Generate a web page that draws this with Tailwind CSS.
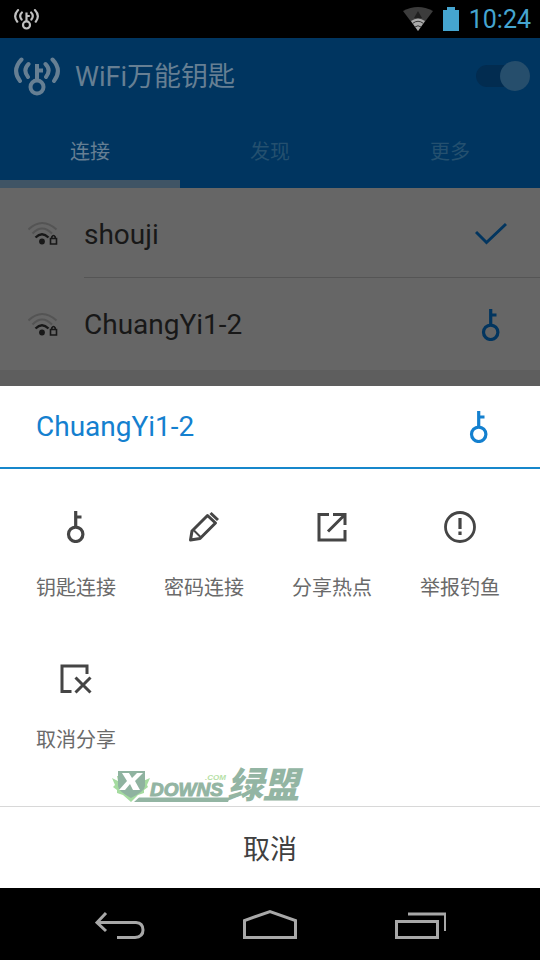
<!DOCTYPE html>
<html lang="zh-CN">
<head>
<meta charset="utf-8">
<meta name="viewport" content="width=device-width, initial-scale=1">
<title>WiFi万能钥匙</title>
<script src="https://cdn.jsdelivr.net/npm/@tailwindcss/browser@4"></script>
</head>
<body class="min-h-screen flex flex-col bg-black font-[Roboto,'Noto_Sans_CJK_SC',sans-serif]">
<svg class="hidden" aria-hidden="true">
  <symbol id="key" viewBox="0 0 32 32"><g fill="none" stroke="currentColor" stroke-width="3.200"><circle cx="15.700" cy="23.300" r="7.200"/><path d="M15.700 16V0M16 6H21.500"/></g></symbol>
  <symbol id="logo" viewBox="0 0 46 40"><g fill="none" stroke="currentColor" stroke-width="4" stroke-linecap="round"><path d="M7.500 3.500Q-2.500 14 6 25M14.500 8Q8.500 14 14 21M31.500 8Q37.500 14 32 21M38.500 3.500Q48.500 14 40 25"/><circle cx="23" cy="31" r="6.500"/><path stroke-linecap="butt" d="M23 25V8M23 14.500H29"/></g></symbol>
  <symbol id="wifi-lock" viewBox="0 0 32 26"><g fill="none" stroke-width="2"><path stroke="#545454" d="M.5 9.500Q14 -3.500 28.500 9.500M4.500 13.500Q14 3.500 24 13.500"/><path stroke="#181818" stroke-width="2.400" d="M7.500 17.500Q14 11 20.500 17.500"/><path stroke="#181818" d="M22.500 18.500H28.500V24H22.500ZM23.800 18.500V17Q25.500 14 27.200 17V18.500" stroke-width="1.600"/></g><circle cx="14" cy="21.500" r="2.900" fill="#181818"/></symbol>
</svg>

<div class="h-[38px] shrink-0 flex items-center pl-3.5 pr-[9px] text-[#45a5d0]">
  <svg class="w-[25px] h-[22px] text-[#c0c0c0]" aria-hidden="true"><use href="#logo"/></svg>
  <svg class="ml-auto w-[30px] h-6" viewBox="0 0 30 24" aria-hidden="true"><path d="M0 4Q15 -4 30 4L15 24Z" fill="#3c3c3c"/><path d="M11 11L15 4L19 11Z" fill="#202020"/><path d="M8 14Q15 9 22 14L15 24Z" fill="#aaa"/><path d="M9.500 16.500Q15 12 20.500 16.500M12 20Q15 17.500 18 20" fill="none" stroke="#333" stroke-width="1"/></svg>
  <svg class="ml-2.5 w-4 h-6" viewBox="0 0 16 24" aria-hidden="true"><path d="M0 3H4V0H12V3H16V24H0Z" fill="currentColor"/></svg>
  <time class="ml-2.5 pt-0.5 text-[25px] leading-7">10:24</time>
</div>

<header class="shrink-0 bg-[#003560] text-[#667f93]">
  <div class="h-[76px] flex items-center pl-3.5 pr-2.5">
    <svg class="w-[46px] h-10" aria-hidden="true"><use href="#logo"/></svg>
    <h1 class="ml-[15px] pt-0.5 text-[27px] leading-8">WiFi万能钥匙</h1>
    <input type="checkbox" role="switch" checked aria-label="WiFi" class="ml-auto relative appearance-none w-[54px] h-[22px] rounded-full bg-[#022c50] before:absolute before:right-0 before:-top-1 before:size-[30px] before:rounded-full before:bg-[#264e6c]">
  </div>
  <nav class="h-[74px] grid grid-cols-3 text-xl leading-7 text-[#24506f]">
    <a href="#" aria-current="page" class="flex items-center justify-center pt-2.5 border-b-8 border-[#3f5465] text-[#667f93]">连接</a>
    <a href="#" class="flex items-center justify-center pt-2.5 border-b-8 border-transparent">发现</a>
    <a href="#" class="flex items-center justify-center pt-2.5 border-b-8 border-transparent">更多</a>
  </nav>
</header>

<main class="flex-1 bg-[#5e5e5e]">
  <ul class="bg-[#666] text-[28px] leading-9 text-[#181818]">
    <li class="pl-7"><button type="button" class="w-full flex items-center gap-6 text-left">
      <svg class="w-8 h-[26px]" aria-hidden="true"><use href="#wifi-lock"/></svg>
      <span class="flex-1 h-[90px] flex items-center justify-between pt-1 pr-[33px] border-b border-[#555]">shouji
        <svg class="size-8" viewBox="0 0 32 32" fill="none" stroke="#02355f" stroke-width="3" aria-hidden="true"><path d="M1 13L11.500 23.500L31 5"/></svg></span>
    </button></li>
    <li class="pl-7"><button type="button" class="w-full flex items-center gap-6 text-left">
      <svg class="w-8 h-[26px]" aria-hidden="true"><use href="#wifi-lock"/></svg>
      <span class="flex-1 h-[92px] flex items-center justify-between pt-0.5 pr-[33px]">ChuangYi1-2
        <svg class="size-8 text-[#02355f]" aria-hidden="true"><use href="#key"/></svg></span>
    </button></li>
  </ul>
</main>

<section role="dialog" aria-labelledby="network" class="shrink-0 bg-white">
  <div class="h-[83px] flex items-center justify-between pl-9 pr-[45px] border-b-2 border-[#1687cb] text-[#1480cf]">
    <h2 id="network" class="text-[28px] leading-9">ChuangYi1-2</h2>
    <svg class="size-8" aria-hidden="true"><use href="#key"/></svg>
  </div>
  <div class="relative pl-3 pr-4 pb-[33px]">
    <div class="grid grid-cols-4 text-xl leading-7 text-[#6a6a6a]">
      <button type="button" class="flex flex-col items-center gap-[31px] pt-[42px] pb-[19px]"><svg class="size-8 text-[#454545]" aria-hidden="true"><use href="#key"/></svg>钥匙连接</button>
      <button type="button" class="flex flex-col items-center gap-[31px] pt-[42px] pb-[19px]"><svg class="size-8" viewBox="0 0 32 32" fill="none" stroke="#454545" stroke-width="3" stroke-linejoin="round" aria-hidden="true"><path d="M2.500 29L4 20L19.500 4.500L27.500 12L12 27.500Z"/><path d="M6 19.500L12.500 26" stroke-width="2"/><path d="M22.500 2L30 9"/></svg>密码连接</button>
      <button type="button" class="flex flex-col items-center gap-[31px] pt-[42px] pb-[19px]"><svg class="size-8" viewBox="0 0 32 32" fill="none" stroke="#454545" stroke-width="3" aria-hidden="true"><path d="M13 3.500H3V29H29V19M17 3.500H29V14M28.500 4L12 20.500"/></svg>分享热点</button>
      <button type="button" class="flex flex-col items-center gap-[31px] pt-[42px] pb-[19px]"><svg class="size-8" viewBox="0 0 32 32" fill="none" stroke="#454545" stroke-width="2.800" aria-hidden="true"><circle cx="16" cy="16" r="14.500"/><path d="M16 7V18M16 20.500V24" stroke-width="3.200"/></svg>举报钓鱼</button>
      <button type="button" class="flex flex-col items-center gap-[31px] pt-[42px] pb-[19px]"><svg class="size-8" viewBox="0 0 32 32" fill="none" stroke="#454545" stroke-width="3" aria-hidden="true"><path d="M11.500 28.500H2V3H27V11"/><path d="M15.500 14.500L30.500 29.500M30.500 14.500L15.500 29.500"/></svg>取消分享</button>
    </div>
    <svg class="absolute left-28 bottom-0.5 w-[192px] h-10 overflow-visible pointer-events-none" viewBox="0 0 192 40" font-family="'Liberation Sans',Arial,sans-serif" font-weight="bold" font-style="italic" aria-hidden="true">
      <path d="M0 14L6 17L5 12L32 12L31 17L38 14L35 21L36 23L32 26L32 29L26 31L19 38L11 31L5 29L5 26L1 23L3 21Z" fill="#a5dba0"/>
      <path d="M6 7H33V22Q33 27 19 34Q6 27 6 22Z" fill="#8fb3a0"/>
      <path d="M10 9H17L20 14L25 9H31L23 17L28 26H21L18 20L13 26H7L15 17Z" fill="#fff"/>
      <path d="M27 33.500H118L116 38H22Z" fill="#93b5a3"/>
      <text x="38" y="32" font-size="19" fill="#93b5a3" stroke="#93b5a3" stroke-width="1">DOWNS</text>
      <text x="93" y="16" font-size="8" fill="#b5dfa5">.COM</text>
      <text x="115" y="34" font-size="36" font-family="'Noto Sans CJK SC',sans-serif" font-weight="900" fill="#93b5a3">绿盟</text>
    </svg>
  </div>
  <button type="button" class="w-full h-[82px] border-t border-[#d8d8d8] text-[27px] leading-9 pt-1 text-[#404040]">取消</button>
</section>

<nav aria-label="系统导航" class="h-[72px] shrink-0 px-[45px] pt-0.5 grid grid-cols-3 place-items-center">
  <button type="button" aria-label="返回"><svg class="w-[50px] h-8" viewBox="0 0 50 32" fill="none" stroke="#a8a8a8" stroke-width="3"><path d="M11 4L2 13.500L11 22M2 13.500H41Q48 14 48 21Q48 28 40 28.500H22"/></svg></button>
  <button type="button" aria-label="主页"><svg class="w-14 h-8" viewBox="0 0 56 32" fill="none" stroke="#a8a8a8" stroke-width="3"><path d="M2.500 28.500V11.500L28 2.500L53.500 11.500V28.500Z"/></svg></button>
  <button type="button" aria-label="最近任务"><svg class="w-[52px] h-8" viewBox="0 0 52 32" fill="none" stroke="#a8a8a8" stroke-width="3"><path d="M2.500 12.500H43.500V28.500H2.500ZM14 5H51.500V22"/></svg></button>
</nav>
</body>
</html>
